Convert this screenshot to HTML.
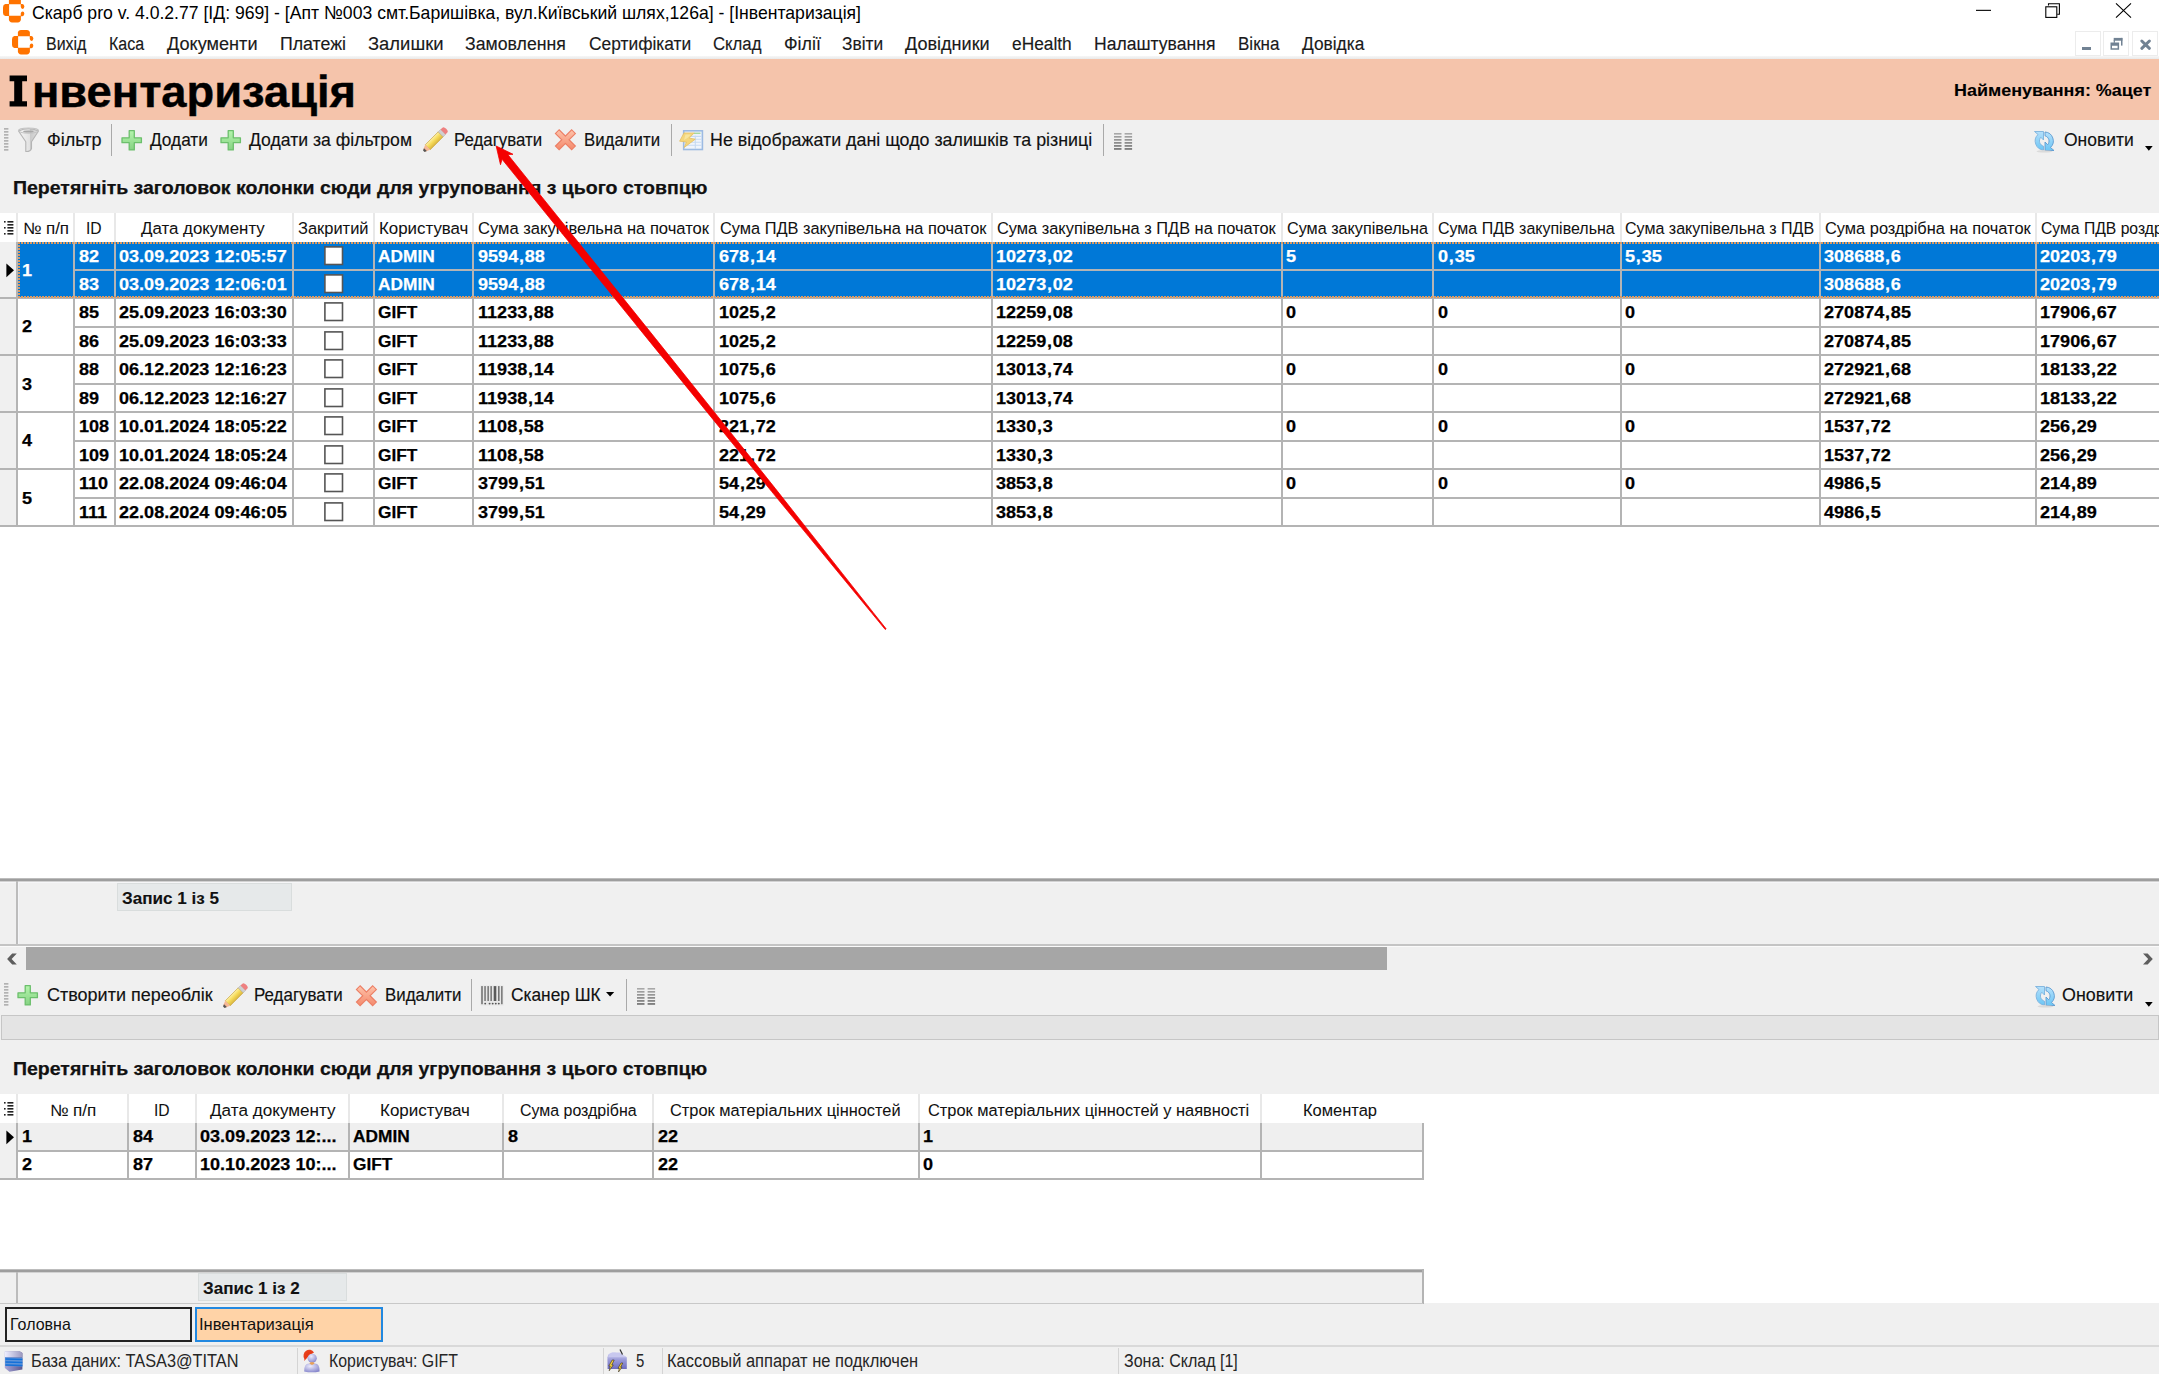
<!DOCTYPE html><html><head><meta charset="utf-8"><style>
html,body{margin:0;padding:0;}
body{width:2159px;height:1374px;position:relative;overflow:hidden;background:#fff;font-family:"Liberation Sans",sans-serif;}
.t{position:absolute;white-space:nowrap;transform-origin:0 0;}
.r{position:absolute;}
</style></head><body>
<div class="r" style="left:0px;top:0px;width:2159px;height:56px;background:#fff;"></div>
<div class="r" style="left:0px;top:56px;width:2159px;height:3px;background:linear-gradient(#f7f7f7,#e9e9e9);"></div>
<div class="r" style="left:0px;top:59px;width:2159px;height:61px;background:#f5c4ab;"></div>
<div class="r" style="left:0px;top:120px;width:2159px;height:93px;background:#f0f0f0;"></div>
<div class="r" style="left:0px;top:213px;width:2159px;height:665px;background:#fff;"></div>
<div class="r" style="left:0px;top:880px;width:2159px;height:64px;background:#f0f0f0;"></div>
<div class="r" style="left:0px;top:878px;width:2159px;height:1px;background:#bdbdbd;"></div>
<div class="r" style="left:0px;top:879px;width:2159px;height:2px;background:#9e9e9e;"></div>
<div class="r" style="left:0px;top:881px;width:2159px;height:1px;background:#d2d2d2;"></div>
<div class="r" style="left:0px;top:882px;width:2159px;height:1px;background:#f6f6f8;"></div>
<div class="r" style="left:0px;top:944px;width:2159px;height:2px;background:#c4c4c4;"></div>
<div class="r" style="left:0px;top:946px;width:2159px;height:1px;background:#fafafa;"></div>
<div class="r" style="left:0px;top:947px;width:2159px;height:147px;background:#f0f0f0;"></div>
<div class="r" style="left:0px;top:1094px;width:2159px;height:209px;background:#fff;"></div>
<div class="r" style="left:0px;top:1303px;width:2159px;height:42px;background:#f0f0f0;"></div>
<div class="r" style="left:0px;top:1345px;width:2159px;height:2px;background:#d9d9d9;"></div>
<div class="r" style="left:0px;top:1347px;width:2159px;height:27px;background:#f0f0f0;"></div>
<svg class="r" style="left:3.3px;top:-1.7px;" width="22" height="25" viewBox="0 0 22 25"><g fill="#ff7300"><path d="M5.9 6.3 L5.9 2.6 Q6.2 0 9 0 H14.8 Q17.6 0 17.9 2.6 L17.9 6.3 Z"/><path d="M6.1 6.1 H2.4 Q0 6.4 0 9.2 V15 Q0 17.6 2.4 17.9 H6.1 Z"/><path d="M5.9 17.7 V21.6 Q6.2 24.4 9 24.4 H14.8 Q17.6 24.4 17.9 21.6 V17.7 Z"/><path d="M17.7 6.1 H19.4 Q21.3 6.3 21.3 8.6 Q21.3 10.9 19.6 10.9 Q17.9 10.9 17.8 8.8 Z"/><path d="M17.7 18.3 H19.4 Q21.3 18.1 21.3 15.8 Q21.3 13.5 19.6 13.5 Q17.9 13.5 17.8 15.6 Z"/></g></svg>
<svg class="r" style="left:11.9px;top:30.2px;" width="22" height="25" viewBox="0 0 22 25"><g fill="#ff7300"><path d="M5.9 6.3 L5.9 2.6 Q6.2 0 9 0 H14.8 Q17.6 0 17.9 2.6 L17.9 6.3 Z"/><path d="M6.1 6.1 H2.4 Q0 6.4 0 9.2 V15 Q0 17.6 2.4 17.9 H6.1 Z"/><path d="M5.9 17.7 V21.6 Q6.2 24.4 9 24.4 H14.8 Q17.6 24.4 17.9 21.6 V17.7 Z"/><path d="M17.7 6.1 H19.4 Q21.3 6.3 21.3 8.6 Q21.3 10.9 19.6 10.9 Q17.9 10.9 17.8 8.8 Z"/><path d="M17.7 18.3 H19.4 Q21.3 18.1 21.3 15.8 Q21.3 13.5 19.6 13.5 Q17.9 13.5 17.8 15.6 Z"/></g></svg>
<div class="t" style="left:31.60px;top:3.00px;font-size:19px;line-height:19px;font-weight:400;color:#000;transform:scaleX(0.9265);">Скарб pro v. 4.0.2.77 [ІД: 969] - [Апт №003 смт.Баришівка, вул.Київський шлях,126а] - [Інвентаризація]</div>
<svg class="r" style="left:1975px;top:0px;" width="180" height="24" viewBox="0 0 180 24"><rect x="1" y="9.8" width="15" height="1.1" fill="#000"/><path d="M73.5 5.5 V3.7 H84.4 V14.3 H82.2" fill="none" stroke="#000" stroke-width="1.1"/><rect x="70.8" y="6.8" width="11" height="10.6" fill="none" stroke="#000" stroke-width="1.1"/><path d="M141 3.3 L156 17.7 M156 3.3 L141 17.7" stroke="#000" stroke-width="1.1"/></svg>
<div class="t" style="left:46.30px;top:35.00px;font-size:18px;line-height:18px;font-weight:400;color:#1a1a1a;transform:scaleX(0.8868);-webkit-text-stroke:0.15px currentColor;">Вихід</div>
<div class="t" style="left:109.30px;top:35.00px;font-size:18px;line-height:18px;font-weight:400;color:#1a1a1a;transform:scaleX(0.8905);-webkit-text-stroke:0.15px currentColor;">Каса</div>
<div class="t" style="left:166.50px;top:35.00px;font-size:18px;line-height:18px;font-weight:400;color:#1a1a1a;transform:scaleX(1.0066);-webkit-text-stroke:0.15px currentColor;">Документи</div>
<div class="t" style="left:280.00px;top:35.00px;font-size:18px;line-height:18px;font-weight:400;color:#1a1a1a;transform:scaleX(0.9859);-webkit-text-stroke:0.15px currentColor;">Платежі</div>
<div class="t" style="left:367.50px;top:35.00px;font-size:18px;line-height:18px;font-weight:400;color:#1a1a1a;transform:scaleX(1.0228);-webkit-text-stroke:0.15px currentColor;">Залишки</div>
<div class="t" style="left:465.10px;top:35.00px;font-size:18px;line-height:18px;font-weight:400;color:#1a1a1a;transform:scaleX(0.9838);-webkit-text-stroke:0.15px currentColor;">Замовлення</div>
<div class="t" style="left:589.20px;top:35.00px;font-size:18px;line-height:18px;font-weight:400;color:#1a1a1a;transform:scaleX(0.9650);-webkit-text-stroke:0.15px currentColor;">Сертифікати</div>
<div class="t" style="left:713.40px;top:35.00px;font-size:18px;line-height:18px;font-weight:400;color:#1a1a1a;transform:scaleX(0.9291);-webkit-text-stroke:0.15px currentColor;">Склад</div>
<div class="t" style="left:783.50px;top:35.00px;font-size:18px;line-height:18px;font-weight:400;color:#1a1a1a;transform:scaleX(0.9923);-webkit-text-stroke:0.15px currentColor;">Філії</div>
<div class="t" style="left:841.70px;top:35.00px;font-size:18px;line-height:18px;font-weight:400;color:#1a1a1a;transform:scaleX(0.9618);-webkit-text-stroke:0.15px currentColor;">Звіти</div>
<div class="t" style="left:904.75px;top:35.00px;font-size:18px;line-height:18px;font-weight:400;color:#1a1a1a;transform:scaleX(1.0029);-webkit-text-stroke:0.15px currentColor;">Довідники</div>
<div class="t" style="left:1011.90px;top:35.00px;font-size:18px;line-height:18px;font-weight:400;color:#1a1a1a;transform:scaleX(0.9622);-webkit-text-stroke:0.15px currentColor;">eHealth</div>
<div class="t" style="left:1094.30px;top:35.00px;font-size:18px;line-height:18px;font-weight:400;color:#1a1a1a;transform:scaleX(0.9758);-webkit-text-stroke:0.15px currentColor;">Налаштування</div>
<div class="t" style="left:1238.40px;top:35.00px;font-size:18px;line-height:18px;font-weight:400;color:#1a1a1a;transform:scaleX(0.9465);-webkit-text-stroke:0.15px currentColor;">Вікна</div>
<div class="t" style="left:1302.00px;top:35.00px;font-size:18px;line-height:18px;font-weight:400;color:#1a1a1a;transform:scaleX(0.9620);-webkit-text-stroke:0.15px currentColor;">Довідка</div>
<div class="r" style="left:2074.7px;top:30.9px;width:25.90000000000009px;height:25.300000000000004px;background:#fff;box-sizing:border-box;border:1px solid #ececec;"></div>
<div class="r" style="left:2103.3px;top:30.9px;width:25.90000000000009px;height:25.300000000000004px;background:#fff;box-sizing:border-box;border:1px solid #ececec;"></div>
<div class="r" style="left:2131.9px;top:30.9px;width:25.90000000000009px;height:25.300000000000004px;background:#fff;box-sizing:border-box;border:1px solid #ececec;"></div>
<svg class="r" style="left:2074px;top:30px;" width="84" height="27" viewBox="0 0 84 27"><g fill="#718293"><rect x="8" y="17" width="9" height="3" /><rect x="39.7" y="7.9" width="8.7" height="2.8"/><rect x="47" y="7.9" width="1.5" height="7.7"/><rect x="39.7" y="10" width="1.2" height="2.8"/><path fill-rule="evenodd" d="M36.5 12.6 H45.1 V19.8 H36.5 Z M38 15.7 H43.6 V18.3 H38 Z"/></g><path d="M67.8 11 L75.4 18.3 M75.4 11 L67.8 18.3" stroke="#718293" stroke-width="3" stroke-linecap="round"/></svg>
<svg class="r" style="left:0px;top:60px;" width="40" height="60" viewBox="0 0 40 60"><path d="M9.6 15.6 H27 V21.2 H22.2 V41.2 H27 V46.6 H9.6 V41.2 H14.2 V21.2 H9.6 Z" fill="#000"/></svg>
<div class="t" style="left:32.00px;top:69.00px;font-size:45px;line-height:45px;font-weight:700;color:#000;transform:scaleX(1.0066);-webkit-text-stroke:0.4px currentColor;">нвентаризація</div>
<div class="t" style="left:1953.70px;top:82.00px;font-size:16.5px;line-height:16.5px;font-weight:700;color:#000;transform:scaleX(1.0869);-webkit-text-stroke:0.1px currentColor;">Найменування: %ацет</div>
<svg class="r" style="left:4.3px;top:128.2px;" width="6" height="26" viewBox="0 0 6 26"><rect x="0" y="0.00" width="4.4" height="1.7" fill="#b2b2b2"/><rect x="0" y="3.00" width="4.4" height="1.7" fill="#b2b2b2"/><rect x="0" y="6.00" width="4.4" height="1.7" fill="#b2b2b2"/><rect x="0" y="9.00" width="4.4" height="1.7" fill="#b2b2b2"/><rect x="0" y="12.00" width="4.4" height="1.7" fill="#b2b2b2"/><rect x="0" y="15.00" width="4.4" height="1.7" fill="#b2b2b2"/><rect x="0" y="18.00" width="4.4" height="1.7" fill="#b2b2b2"/><rect x="0" y="21.00" width="4.4" height="1.7" fill="#b2b2b2"/></svg>
<svg class="r" style="left:14px;top:125px;" width="30" height="30" viewBox="0 0 30 30"><defs><linearGradient id="fg" x1="0" y1="0" x2="1" y2="0"><stop offset="0" stop-color="#f6f6f6"/><stop offset="0.55" stop-color="#e2e2e2"/><stop offset="0.56" stop-color="#c8c8c8"/><stop offset="1" stop-color="#dedede"/></linearGradient></defs><path d="M4.5 6 Q14.5 1.5 24.5 6 L17.5 16.8 V23.5 Q16.5 26.5 12.5 26.5 H11.8 V16.8 Z" fill="url(#fg)" stroke="#b4b4b4" stroke-width="1.1" stroke-linejoin="round"/><ellipse cx="14.5" cy="5.6" rx="10" ry="2.6" fill="none" stroke="#c4c4c4" stroke-width="1.1"/><ellipse cx="14.4" cy="6.6" rx="5.2" ry="1.0" fill="#a8a8a8"/></svg>
<div class="t" style="left:46.90px;top:132.00px;font-size:17.5px;line-height:17.5px;font-weight:400;color:#111;transform:scaleX(1.0302);-webkit-text-stroke:0.15px currentColor;">Фільтр</div>
<div class="r" style="left:111.3px;top:123.5px;width:1.2000000000000028px;height:32.5px;background:#a9a9a9;"></div>
<svg class="r" style="left:121px;top:129.5px;" width="22" height="21" viewBox="0 0 22 21"><defs><linearGradient id="pg" x1="0" y1="0" x2="0" y2="1"><stop offset="0" stop-color="#b4f5ac"/><stop offset="1" stop-color="#86d283"/></linearGradient></defs><path d="M8.2 0.7 H13.3 V7.8 H20.4 V12.7 H13.3 V19.9 H8.2 V12.7 H1 V7.8 H8.2 Z" fill="url(#pg)" stroke="#6cbf6c" stroke-width="1.3" stroke-linejoin="round"/></svg>
<div class="t" style="left:150.00px;top:132.00px;font-size:17.5px;line-height:17.5px;font-weight:400;color:#111;transform:scaleX(0.9856);-webkit-text-stroke:0.15px currentColor;">Додати</div>
<svg class="r" style="left:220.2px;top:129.5px;" width="22" height="21" viewBox="0 0 22 21"><defs><linearGradient id="pg" x1="0" y1="0" x2="0" y2="1"><stop offset="0" stop-color="#b4f5ac"/><stop offset="1" stop-color="#86d283"/></linearGradient></defs><path d="M8.2 0.7 H13.3 V7.8 H20.4 V12.7 H13.3 V19.9 H8.2 V12.7 H1 V7.8 H8.2 Z" fill="url(#pg)" stroke="#6cbf6c" stroke-width="1.3" stroke-linejoin="round"/></svg>
<div class="t" style="left:248.80px;top:132.00px;font-size:17.5px;line-height:17.5px;font-weight:400;color:#111;transform:scaleX(1.0063);-webkit-text-stroke:0.15px currentColor;">Додати за фільтром</div>
<svg class="r" style="left:418px;top:124px;" width="34" height="32" viewBox="0 0 34 32"><defs><linearGradient id="pcg" x1="0" y1="0" x2="0" y2="1"><stop offset="0" stop-color="#fbf0a8"/><stop offset="0.45" stop-color="#f7dc5a"/><stop offset="1" stop-color="#d9b640"/></linearGradient></defs><g transform="translate(17,16) rotate(-45) scale(0.9)"><path d="M-11.5 -3.9 H9 V3.9 H-11.5 Z" fill="url(#pcg)" stroke="#c9a440" stroke-width="0.7"/><path d="M9 -3.9 H12.6 V3.9 H9 Z" fill="#cfcfcf" stroke="#a8a8a8" stroke-width="0.5"/><path d="M12.6 -3.9 H15.5 Q17.6 -3.9 17.6 0 Q17.6 3.9 15.5 3.9 H12.6 Z" fill="#ee8080"/><path d="M-11.5 -3.9 L-17 -1.6 V1.6 L-11.5 3.9 Z" fill="#f6b896"/><path d="M-15 -2.2 L-17.6 -1.2 V1.2 L-15 2.2 Z" fill="#555"/></g></svg>
<div class="t" style="left:453.80px;top:132.00px;font-size:17.5px;line-height:17.5px;font-weight:400;color:#111;transform:scaleX(0.9633);-webkit-text-stroke:0.15px currentColor;">Редагувати</div>
<svg class="r" style="left:550px;top:125px;" width="32" height="30" viewBox="0 0 32 30"><defs><linearGradient id="xg" x1="0" y1="0" x2="0" y2="1"><stop offset="0" stop-color="#fdbda4"/><stop offset="1" stop-color="#f58f72"/></linearGradient></defs><path d="M6.9 6.3 L23.9 23.3 M23.9 6.3 L6.9 23.3" stroke="#ec7e64" stroke-width="6.4"/><path d="M7.6 7.0 L23.2 22.6 M23.2 7.0 L7.6 22.6" stroke="url(#xg)" stroke-width="4.0"/></svg>
<div class="t" style="left:584.40px;top:132.00px;font-size:17.5px;line-height:17.5px;font-weight:400;color:#111;transform:scaleX(0.9612);-webkit-text-stroke:0.15px currentColor;">Видалити</div>
<div class="r" style="left:670.8px;top:123.7px;width:1.2000000000000455px;height:32.3px;background:#a9a9a9;"></div>
<svg class="r" style="left:675px;top:125px;" width="32" height="30" viewBox="0 0 32 30"><rect x="8.7" y="5.8" width="18.7" height="18.7" fill="#f0f5fc" stroke="#9cbae2" stroke-width="1.6"/><g stroke="#c6daf2" stroke-width="1.1"><path d="M10 11.4 H26.5 M10 14.2 H26.5 M10 17.2 H26.5 M10 20.3 H26.5 M20.3 10.5 V24"/></g><path d="M19 8.3 H25.5" stroke="#a6d89e" stroke-width="1.5"/><path d="M9 7.9 L19.2 7.9 L14.2 13.1 L20.3 14.2 L9.2 22.5 L11.4 17 L4.6 16.2 Z" fill="#f4d67c" stroke="#e4bb5a" stroke-width="0.7" stroke-linejoin="round"/><path d="M10.5 9.5 L16 9.5 L12.5 13 L9 15 Z" fill="#f9e8a6" opacity="0.8"/></svg>
<div class="t" style="left:710.00px;top:132.00px;font-size:17.5px;line-height:17.5px;font-weight:400;color:#111;transform:scaleX(1.0188);-webkit-text-stroke:0.15px currentColor;">Не відображати дані щодо залишків та різниці</div>
<div class="r" style="left:1102.6px;top:123.6px;width:1.2000000000000455px;height:32.5px;background:#a9a9a9;"></div>
<svg class="r" style="left:1114.4px;top:132.6px;" width="19" height="18" viewBox="0 0 19 18"><rect x="0" y="0.00" width="7.5" height="1.6" fill="#a8a8a8"/><rect x="10.6" y="0.00" width="7.5" height="1.6" fill="#a8a8a8"/><rect x="0" y="3.03" width="7.5" height="1.6" fill="#9c9c9c"/><rect x="10.6" y="3.03" width="7.5" height="1.6" fill="#9c9c9c"/><rect x="0" y="6.06" width="7.5" height="1.6" fill="#909090"/><rect x="10.6" y="6.06" width="7.5" height="1.6" fill="#909090"/><rect x="0" y="9.09" width="7.5" height="1.6" fill="#848484"/><rect x="10.6" y="9.09" width="7.5" height="1.6" fill="#848484"/><rect x="0" y="12.12" width="7.5" height="1.6" fill="#787878"/><rect x="10.6" y="12.12" width="7.5" height="1.6" fill="#787878"/><rect x="0" y="15.15" width="7.5" height="1.6" fill="#6c6c6c"/><rect x="10.6" y="15.15" width="7.5" height="1.6" fill="#6c6c6c"/></svg>
<svg class="r" style="left:2033px;top:128.5px;" width="23" height="24" viewBox="0 0 23 24"><defs><linearGradient id="rg" x1="0" y1="0" x2="0" y2="1"><stop offset="0" stop-color="#b5e0fb"/><stop offset="1" stop-color="#6cc6f5"/></linearGradient></defs><path d="M10.5 21 A9 9 0 0 1 5 5.5 L1.5 2.5 H10.5 V11 L7.8 8.3 A5.5 5.5 0 0 0 10.5 17.2 Z" fill="url(#rg)" stroke="#7cb2de" stroke-width="0.9"/><path d="M12 3 A9 9 0 0 1 17.5 18.5 L21 21.5 H12 V13 L14.7 15.7 A5.5 5.5 0 0 0 12 6.8 Z" fill="url(#rg)" stroke="#5c9ad0" stroke-width="0.9"/><ellipse cx="11.5" cy="22.3" rx="8" ry="1.2" fill="#d0d0d0" opacity="0.7"/></svg>
<div class="t" style="left:2063.50px;top:132.00px;font-size:17.5px;line-height:17.5px;font-weight:400;color:#111;transform:scaleX(0.9989);-webkit-text-stroke:0.15px currentColor;">Оновити</div>
<svg class="r" style="left:2144.9px;top:146px;" width="10" height="6" viewBox="0 0 10 6"><path d="M0 0 H7.7 L3.85 4.8 Z" fill="#000"/></svg>
<div class="t" style="left:12.80px;top:179.00px;font-size:18.5px;line-height:18.5px;font-weight:700;color:#111;transform:scaleX(1.0543);-webkit-text-stroke:0.25px currentColor;">Перетягніть заголовок колонки сюди для угруповання з цього стовпцю</div>
<div class="r" style="left:16px;top:213px;width:2px;height:29px;background:#e8e8e8;"></div>
<div class="r" style="left:73px;top:213px;width:2px;height:29px;background:#e8e8e8;"></div>
<div class="r" style="left:114px;top:213px;width:2px;height:29px;background:#e8e8e8;"></div>
<div class="r" style="left:292px;top:213px;width:2px;height:29px;background:#e8e8e8;"></div>
<div class="r" style="left:373px;top:213px;width:2px;height:29px;background:#e8e8e8;"></div>
<div class="r" style="left:472px;top:213px;width:2px;height:29px;background:#e8e8e8;"></div>
<div class="r" style="left:713px;top:213px;width:2px;height:29px;background:#e8e8e8;"></div>
<div class="r" style="left:991px;top:213px;width:2px;height:29px;background:#e8e8e8;"></div>
<div class="r" style="left:1281px;top:213px;width:2px;height:29px;background:#e8e8e8;"></div>
<div class="r" style="left:1432px;top:213px;width:2px;height:29px;background:#e8e8e8;"></div>
<div class="r" style="left:1620px;top:213px;width:2px;height:29px;background:#e8e8e8;"></div>
<div class="r" style="left:1819px;top:213px;width:2px;height:29px;background:#e8e8e8;"></div>
<div class="r" style="left:2035px;top:213px;width:2px;height:29px;background:#e8e8e8;"></div>
<svg class="r" style="left:4.2px;top:221.2px;" width="10" height="14" viewBox="0 0 10 14"><rect x="0" y="0" width="1.6" height="1.6" fill="#222"/><rect x="3.4" y="0" width="6" height="1.6" fill="#222"/><rect x="3.4" y="3" width="6" height="1.6" fill="#222"/><rect x="0" y="6" width="1.6" height="1.6" fill="#222"/><rect x="3.4" y="6" width="6" height="1.6" fill="#222"/><rect x="3.4" y="9" width="6" height="1.6" fill="#222"/><rect x="0" y="12" width="1.6" height="1.6" fill="#222"/><rect x="3.4" y="12" width="6" height="1.6" fill="#222"/></svg>
<div class="t" style="left:22.80px;top:220.00px;font-size:16.3px;line-height:16.3px;font-weight:400;color:#111;transform:scaleX(1.0432);-webkit-text-stroke:0.05px currentColor;">№ п/п</div>
<div class="t" style="left:86.00px;top:220.00px;font-size:16.3px;line-height:16.3px;font-weight:400;color:#111;transform:scaleX(0.9632);-webkit-text-stroke:0.05px currentColor;">ID</div>
<div class="t" style="left:141.20px;top:220.00px;font-size:16.3px;line-height:16.3px;font-weight:400;color:#111;transform:scaleX(1.0363);-webkit-text-stroke:0.05px currentColor;">Дата документу</div>
<div class="t" style="left:298.20px;top:220.00px;font-size:16.3px;line-height:16.3px;font-weight:400;color:#111;transform:scaleX(1.0101);-webkit-text-stroke:0.05px currentColor;">Закритий</div>
<div class="t" style="left:378.70px;top:220.00px;font-size:16.3px;line-height:16.3px;font-weight:400;color:#111;transform:scaleX(1.0364);-webkit-text-stroke:0.05px currentColor;">Користувач</div>
<div class="t" style="left:477.90px;top:220.00px;font-size:16.3px;line-height:16.3px;font-weight:400;color:#111;transform:scaleX(1.0172);-webkit-text-stroke:0.05px currentColor;">Сума закупівельна на початок</div>
<div class="t" style="left:719.90px;top:220.00px;font-size:16.3px;line-height:16.3px;font-weight:400;color:#111;transform:scaleX(1.0044);-webkit-text-stroke:0.05px currentColor;">Сума ПДВ закупівельна на початок</div>
<div class="t" style="left:997.10px;top:220.00px;font-size:16.3px;line-height:16.3px;font-weight:400;color:#111;transform:scaleX(1.0056);-webkit-text-stroke:0.05px currentColor;">Сума закупівельна з ПДВ на початок</div>
<div class="t" style="left:1286.90px;top:220.00px;font-size:16.3px;line-height:16.3px;font-weight:400;color:#111;transform:scaleX(0.9932);-webkit-text-stroke:0.05px currentColor;">Сума закупівельна</div>
<div class="t" style="left:1437.70px;top:220.00px;font-size:16.3px;line-height:16.3px;font-weight:400;color:#111;transform:scaleX(0.9815);-webkit-text-stroke:0.05px currentColor;">Сума ПДВ закупівельна</div>
<div class="t" style="left:1625.30px;top:220.00px;font-size:16.3px;line-height:16.3px;font-weight:400;color:#111;transform:scaleX(0.9853);-webkit-text-stroke:0.05px currentColor;">Сума закупівельна з ПДВ</div>
<div class="t" style="left:1824.80px;top:220.00px;font-size:16.3px;line-height:16.3px;font-weight:400;color:#111;transform:scaleX(1.0067);-webkit-text-stroke:0.05px currentColor;">Сума роздрібна на початок</div>
<div class="t" style="left:2041.00px;top:220.00px;font-size:16.3px;line-height:16.3px;font-weight:400;color:#111;transform:scaleX(0.9642);-webkit-text-stroke:0.05px currentColor;">Сума ПДВ роздрібна на початок</div>
<div class="r" style="left:0px;top:242px;width:17px;height:284px;background:#f0f0f0;"></div>
<div class="r" style="left:17px;top:242px;width:2142px;height:56px;background:#0078d7;"></div>
<div class="r" style="left:16px;top:242px;width:2px;height:285px;background:#b4b4b4;"></div>
<div class="r" style="left:73px;top:242px;width:2px;height:285px;background:#b4b4b4;"></div>
<div class="r" style="left:114px;top:242px;width:2px;height:285px;background:#b4b4b4;"></div>
<div class="r" style="left:292px;top:242px;width:2px;height:285px;background:#b4b4b4;"></div>
<div class="r" style="left:373px;top:242px;width:2px;height:285px;background:#b4b4b4;"></div>
<div class="r" style="left:472px;top:242px;width:2px;height:285px;background:#b4b4b4;"></div>
<div class="r" style="left:713px;top:242px;width:2px;height:285px;background:#b4b4b4;"></div>
<div class="r" style="left:991px;top:242px;width:2px;height:285px;background:#b4b4b4;"></div>
<div class="r" style="left:1281px;top:242px;width:2px;height:285px;background:#b4b4b4;"></div>
<div class="r" style="left:1432px;top:242px;width:2px;height:285px;background:#b4b4b4;"></div>
<div class="r" style="left:1620px;top:242px;width:2px;height:285px;background:#b4b4b4;"></div>
<div class="r" style="left:1819px;top:242px;width:2px;height:285px;background:#b4b4b4;"></div>
<div class="r" style="left:2035px;top:242px;width:2px;height:285px;background:#b4b4b4;"></div>
<div class="r" style="left:73px;top:269px;width:2086px;height:2px;background:#b4b4b4;"></div>
<div class="r" style="left:0px;top:297px;width:2159px;height:2px;background:#b4b4b4;"></div>
<div class="r" style="left:73px;top:326px;width:2086px;height:2px;background:#b4b4b4;"></div>
<div class="r" style="left:0px;top:354px;width:2159px;height:2px;background:#b4b4b4;"></div>
<div class="r" style="left:73px;top:383px;width:2086px;height:2px;background:#b4b4b4;"></div>
<div class="r" style="left:0px;top:411px;width:2159px;height:2px;background:#b4b4b4;"></div>
<div class="r" style="left:73px;top:440px;width:2086px;height:2px;background:#b4b4b4;"></div>
<div class="r" style="left:0px;top:468px;width:2159px;height:2px;background:#b4b4b4;"></div>
<div class="r" style="left:73px;top:497px;width:2086px;height:2px;background:#b4b4b4;"></div>
<div class="r" style="left:0px;top:525px;width:2159px;height:2px;background:#b4b4b4;"></div>
<div class="r" style="left:18px;top:242px;width:2141px;height:1.5px;background:repeating-linear-gradient(90deg,#dc9a62 0 1.6px,transparent 1.6px 3px);"></div>
<div class="r" style="left:18px;top:296px;width:2141px;height:1.5px;background:repeating-linear-gradient(90deg,#dc9a62 0 1.6px,transparent 1.6px 3px);"></div>
<div class="r" style="left:18px;top:242px;width:1.5px;height:55px;background:repeating-linear-gradient(180deg,#dc9a62 0 1.6px,transparent 1.6px 3px);"></div>
<svg class="r" style="left:5.5px;top:262.5px;" width="9" height="15" viewBox="0 0 9 15"><path d="M0.4 0.4 L8 7.2 L0.4 14.2 Z" fill="#000"/></svg>
<div class="t" style="left:78.60px;top:248.00px;font-size:17.2px;line-height:17.2px;font-weight:700;color:#fff;transform:scaleX(1.0506);-webkit-text-stroke:0.25px currentColor;">82</div>
<div class="t" style="left:119.00px;top:248.00px;font-size:17.2px;line-height:17.2px;font-weight:700;color:#fff;transform:scaleX(1.0506);-webkit-text-stroke:0.25px currentColor;">03.09.2023 12:05:57</div>
<svg class="r" style="left:324px;top:245.8px;" width="20" height="20" viewBox="0 0 20 20"><rect x="0.9" y="0.9" width="17.6" height="17.6" fill="#fff" stroke="#555" stroke-width="1.6"/></svg>
<div class="t" style="left:378.20px;top:248.00px;font-size:17.2px;line-height:17.2px;font-weight:700;color:#fff;transform:scaleX(1.0060);-webkit-text-stroke:0.25px currentColor;">ADMIN</div>
<div class="t" style="left:477.60px;top:248.00px;font-size:17.2px;line-height:17.2px;font-weight:700;color:#fff;transform:scaleX(1.0506);-webkit-text-stroke:0.25px currentColor;">9594<span style="padding:0 0.75px">,</span>88</div>
<div class="t" style="left:718.80px;top:248.00px;font-size:17.2px;line-height:17.2px;font-weight:700;color:#fff;transform:scaleX(1.0506);-webkit-text-stroke:0.25px currentColor;">678<span style="padding:0 0.75px">,</span>14</div>
<div class="t" style="left:996.10px;top:248.00px;font-size:17.2px;line-height:17.2px;font-weight:700;color:#fff;transform:scaleX(1.0506);-webkit-text-stroke:0.25px currentColor;">10273<span style="padding:0 0.75px">,</span>02</div>
<div class="t" style="left:1286.00px;top:248.00px;font-size:17.2px;line-height:17.2px;font-weight:700;color:#fff;transform:scaleX(1.0506);-webkit-text-stroke:0.25px currentColor;">5</div>
<div class="t" style="left:1437.70px;top:248.00px;font-size:17.2px;line-height:17.2px;font-weight:700;color:#fff;transform:scaleX(1.0506);-webkit-text-stroke:0.25px currentColor;">0<span style="padding:0 0.75px">,</span>35</div>
<div class="t" style="left:1624.90px;top:248.00px;font-size:17.2px;line-height:17.2px;font-weight:700;color:#fff;transform:scaleX(1.0506);-webkit-text-stroke:0.25px currentColor;">5<span style="padding:0 0.75px">,</span>35</div>
<div class="t" style="left:1824.10px;top:248.00px;font-size:17.2px;line-height:17.2px;font-weight:700;color:#fff;transform:scaleX(1.0506);-webkit-text-stroke:0.25px currentColor;">308688<span style="padding:0 0.75px">,</span>6</div>
<div class="t" style="left:2040.20px;top:248.00px;font-size:17.2px;line-height:17.2px;font-weight:700;color:#fff;transform:scaleX(1.0506);-webkit-text-stroke:0.25px currentColor;">20203<span style="padding:0 0.75px">,</span>79</div>
<div class="t" style="left:78.60px;top:276.00px;font-size:17.2px;line-height:17.2px;font-weight:700;color:#fff;transform:scaleX(1.0506);-webkit-text-stroke:0.25px currentColor;">83</div>
<div class="t" style="left:119.00px;top:276.00px;font-size:17.2px;line-height:17.2px;font-weight:700;color:#fff;transform:scaleX(1.0506);-webkit-text-stroke:0.25px currentColor;">03.09.2023 12:06:01</div>
<svg class="r" style="left:324px;top:274.2px;" width="20" height="20" viewBox="0 0 20 20"><rect x="0.9" y="0.9" width="17.6" height="17.6" fill="#fff" stroke="#555" stroke-width="1.6"/></svg>
<div class="t" style="left:378.20px;top:276.00px;font-size:17.2px;line-height:17.2px;font-weight:700;color:#fff;transform:scaleX(1.0060);-webkit-text-stroke:0.25px currentColor;">ADMIN</div>
<div class="t" style="left:477.60px;top:276.00px;font-size:17.2px;line-height:17.2px;font-weight:700;color:#fff;transform:scaleX(1.0506);-webkit-text-stroke:0.25px currentColor;">9594<span style="padding:0 0.75px">,</span>88</div>
<div class="t" style="left:718.80px;top:276.00px;font-size:17.2px;line-height:17.2px;font-weight:700;color:#fff;transform:scaleX(1.0506);-webkit-text-stroke:0.25px currentColor;">678<span style="padding:0 0.75px">,</span>14</div>
<div class="t" style="left:996.10px;top:276.00px;font-size:17.2px;line-height:17.2px;font-weight:700;color:#fff;transform:scaleX(1.0506);-webkit-text-stroke:0.25px currentColor;">10273<span style="padding:0 0.75px">,</span>02</div>
<div class="t" style="left:1824.10px;top:276.00px;font-size:17.2px;line-height:17.2px;font-weight:700;color:#fff;transform:scaleX(1.0506);-webkit-text-stroke:0.25px currentColor;">308688<span style="padding:0 0.75px">,</span>6</div>
<div class="t" style="left:2040.20px;top:276.00px;font-size:17.2px;line-height:17.2px;font-weight:700;color:#fff;transform:scaleX(1.0506);-webkit-text-stroke:0.25px currentColor;">20203<span style="padding:0 0.75px">,</span>79</div>
<div class="t" style="left:78.60px;top:304.00px;font-size:17.2px;line-height:17.2px;font-weight:700;color:#000;transform:scaleX(1.0506);-webkit-text-stroke:0.25px currentColor;">85</div>
<div class="t" style="left:119.00px;top:304.00px;font-size:17.2px;line-height:17.2px;font-weight:700;color:#000;transform:scaleX(1.0506);-webkit-text-stroke:0.25px currentColor;">25.09.2023 16:03:30</div>
<svg class="r" style="left:324px;top:301.8px;" width="20" height="20" viewBox="0 0 20 20"><rect x="0.9" y="0.9" width="17.6" height="17.6" fill="#fff" stroke="#555" stroke-width="1.6"/></svg>
<div class="t" style="left:378.20px;top:304.00px;font-size:17.2px;line-height:17.2px;font-weight:700;color:#000;transform:scaleX(1.0060);-webkit-text-stroke:0.25px currentColor;">GIFT</div>
<div class="t" style="left:477.60px;top:304.00px;font-size:17.2px;line-height:17.2px;font-weight:700;color:#000;transform:scaleX(1.0506);-webkit-text-stroke:0.25px currentColor;">11233<span style="padding:0 0.75px">,</span>88</div>
<div class="t" style="left:718.80px;top:304.00px;font-size:17.2px;line-height:17.2px;font-weight:700;color:#000;transform:scaleX(1.0506);-webkit-text-stroke:0.25px currentColor;">1025<span style="padding:0 0.75px">,</span>2</div>
<div class="t" style="left:996.10px;top:304.00px;font-size:17.2px;line-height:17.2px;font-weight:700;color:#000;transform:scaleX(1.0506);-webkit-text-stroke:0.25px currentColor;">12259<span style="padding:0 0.75px">,</span>08</div>
<div class="t" style="left:1286.00px;top:304.00px;font-size:17.2px;line-height:17.2px;font-weight:700;color:#000;transform:scaleX(1.0506);-webkit-text-stroke:0.25px currentColor;">0</div>
<div class="t" style="left:1437.70px;top:304.00px;font-size:17.2px;line-height:17.2px;font-weight:700;color:#000;transform:scaleX(1.0506);-webkit-text-stroke:0.25px currentColor;">0</div>
<div class="t" style="left:1624.90px;top:304.00px;font-size:17.2px;line-height:17.2px;font-weight:700;color:#000;transform:scaleX(1.0506);-webkit-text-stroke:0.25px currentColor;">0</div>
<div class="t" style="left:1824.10px;top:304.00px;font-size:17.2px;line-height:17.2px;font-weight:700;color:#000;transform:scaleX(1.0506);-webkit-text-stroke:0.25px currentColor;">270874<span style="padding:0 0.75px">,</span>85</div>
<div class="t" style="left:2040.20px;top:304.00px;font-size:17.2px;line-height:17.2px;font-weight:700;color:#000;transform:scaleX(1.0506);-webkit-text-stroke:0.25px currentColor;">17906<span style="padding:0 0.75px">,</span>67</div>
<div class="t" style="left:78.60px;top:333.00px;font-size:17.2px;line-height:17.2px;font-weight:700;color:#000;transform:scaleX(1.0506);-webkit-text-stroke:0.25px currentColor;">86</div>
<div class="t" style="left:119.00px;top:333.00px;font-size:17.2px;line-height:17.2px;font-weight:700;color:#000;transform:scaleX(1.0506);-webkit-text-stroke:0.25px currentColor;">25.09.2023 16:03:33</div>
<svg class="r" style="left:324px;top:331.2px;" width="20" height="20" viewBox="0 0 20 20"><rect x="0.9" y="0.9" width="17.6" height="17.6" fill="#fff" stroke="#555" stroke-width="1.6"/></svg>
<div class="t" style="left:378.20px;top:333.00px;font-size:17.2px;line-height:17.2px;font-weight:700;color:#000;transform:scaleX(1.0060);-webkit-text-stroke:0.25px currentColor;">GIFT</div>
<div class="t" style="left:477.60px;top:333.00px;font-size:17.2px;line-height:17.2px;font-weight:700;color:#000;transform:scaleX(1.0506);-webkit-text-stroke:0.25px currentColor;">11233<span style="padding:0 0.75px">,</span>88</div>
<div class="t" style="left:718.80px;top:333.00px;font-size:17.2px;line-height:17.2px;font-weight:700;color:#000;transform:scaleX(1.0506);-webkit-text-stroke:0.25px currentColor;">1025<span style="padding:0 0.75px">,</span>2</div>
<div class="t" style="left:996.10px;top:333.00px;font-size:17.2px;line-height:17.2px;font-weight:700;color:#000;transform:scaleX(1.0506);-webkit-text-stroke:0.25px currentColor;">12259<span style="padding:0 0.75px">,</span>08</div>
<div class="t" style="left:1824.10px;top:333.00px;font-size:17.2px;line-height:17.2px;font-weight:700;color:#000;transform:scaleX(1.0506);-webkit-text-stroke:0.25px currentColor;">270874<span style="padding:0 0.75px">,</span>85</div>
<div class="t" style="left:2040.20px;top:333.00px;font-size:17.2px;line-height:17.2px;font-weight:700;color:#000;transform:scaleX(1.0506);-webkit-text-stroke:0.25px currentColor;">17906<span style="padding:0 0.75px">,</span>67</div>
<div class="t" style="left:78.60px;top:361.00px;font-size:17.2px;line-height:17.2px;font-weight:700;color:#000;transform:scaleX(1.0506);-webkit-text-stroke:0.25px currentColor;">88</div>
<div class="t" style="left:119.00px;top:361.00px;font-size:17.2px;line-height:17.2px;font-weight:700;color:#000;transform:scaleX(1.0506);-webkit-text-stroke:0.25px currentColor;">06.12.2023 12:16:23</div>
<svg class="r" style="left:324px;top:358.8px;" width="20" height="20" viewBox="0 0 20 20"><rect x="0.9" y="0.9" width="17.6" height="17.6" fill="#fff" stroke="#555" stroke-width="1.6"/></svg>
<div class="t" style="left:378.20px;top:361.00px;font-size:17.2px;line-height:17.2px;font-weight:700;color:#000;transform:scaleX(1.0060);-webkit-text-stroke:0.25px currentColor;">GIFT</div>
<div class="t" style="left:477.60px;top:361.00px;font-size:17.2px;line-height:17.2px;font-weight:700;color:#000;transform:scaleX(1.0506);-webkit-text-stroke:0.25px currentColor;">11938<span style="padding:0 0.75px">,</span>14</div>
<div class="t" style="left:718.80px;top:361.00px;font-size:17.2px;line-height:17.2px;font-weight:700;color:#000;transform:scaleX(1.0506);-webkit-text-stroke:0.25px currentColor;">1075<span style="padding:0 0.75px">,</span>6</div>
<div class="t" style="left:996.10px;top:361.00px;font-size:17.2px;line-height:17.2px;font-weight:700;color:#000;transform:scaleX(1.0506);-webkit-text-stroke:0.25px currentColor;">13013<span style="padding:0 0.75px">,</span>74</div>
<div class="t" style="left:1286.00px;top:361.00px;font-size:17.2px;line-height:17.2px;font-weight:700;color:#000;transform:scaleX(1.0506);-webkit-text-stroke:0.25px currentColor;">0</div>
<div class="t" style="left:1437.70px;top:361.00px;font-size:17.2px;line-height:17.2px;font-weight:700;color:#000;transform:scaleX(1.0506);-webkit-text-stroke:0.25px currentColor;">0</div>
<div class="t" style="left:1624.90px;top:361.00px;font-size:17.2px;line-height:17.2px;font-weight:700;color:#000;transform:scaleX(1.0506);-webkit-text-stroke:0.25px currentColor;">0</div>
<div class="t" style="left:1824.10px;top:361.00px;font-size:17.2px;line-height:17.2px;font-weight:700;color:#000;transform:scaleX(1.0506);-webkit-text-stroke:0.25px currentColor;">272921<span style="padding:0 0.75px">,</span>68</div>
<div class="t" style="left:2040.20px;top:361.00px;font-size:17.2px;line-height:17.2px;font-weight:700;color:#000;transform:scaleX(1.0506);-webkit-text-stroke:0.25px currentColor;">18133<span style="padding:0 0.75px">,</span>22</div>
<div class="t" style="left:78.60px;top:390.00px;font-size:17.2px;line-height:17.2px;font-weight:700;color:#000;transform:scaleX(1.0506);-webkit-text-stroke:0.25px currentColor;">89</div>
<div class="t" style="left:119.00px;top:390.00px;font-size:17.2px;line-height:17.2px;font-weight:700;color:#000;transform:scaleX(1.0506);-webkit-text-stroke:0.25px currentColor;">06.12.2023 12:16:27</div>
<svg class="r" style="left:324px;top:388.2px;" width="20" height="20" viewBox="0 0 20 20"><rect x="0.9" y="0.9" width="17.6" height="17.6" fill="#fff" stroke="#555" stroke-width="1.6"/></svg>
<div class="t" style="left:378.20px;top:390.00px;font-size:17.2px;line-height:17.2px;font-weight:700;color:#000;transform:scaleX(1.0060);-webkit-text-stroke:0.25px currentColor;">GIFT</div>
<div class="t" style="left:477.60px;top:390.00px;font-size:17.2px;line-height:17.2px;font-weight:700;color:#000;transform:scaleX(1.0506);-webkit-text-stroke:0.25px currentColor;">11938<span style="padding:0 0.75px">,</span>14</div>
<div class="t" style="left:718.80px;top:390.00px;font-size:17.2px;line-height:17.2px;font-weight:700;color:#000;transform:scaleX(1.0506);-webkit-text-stroke:0.25px currentColor;">1075<span style="padding:0 0.75px">,</span>6</div>
<div class="t" style="left:996.10px;top:390.00px;font-size:17.2px;line-height:17.2px;font-weight:700;color:#000;transform:scaleX(1.0506);-webkit-text-stroke:0.25px currentColor;">13013<span style="padding:0 0.75px">,</span>74</div>
<div class="t" style="left:1824.10px;top:390.00px;font-size:17.2px;line-height:17.2px;font-weight:700;color:#000;transform:scaleX(1.0506);-webkit-text-stroke:0.25px currentColor;">272921<span style="padding:0 0.75px">,</span>68</div>
<div class="t" style="left:2040.20px;top:390.00px;font-size:17.2px;line-height:17.2px;font-weight:700;color:#000;transform:scaleX(1.0506);-webkit-text-stroke:0.25px currentColor;">18133<span style="padding:0 0.75px">,</span>22</div>
<div class="t" style="left:78.60px;top:418.00px;font-size:17.2px;line-height:17.2px;font-weight:700;color:#000;transform:scaleX(1.0506);-webkit-text-stroke:0.25px currentColor;">108</div>
<div class="t" style="left:119.00px;top:418.00px;font-size:17.2px;line-height:17.2px;font-weight:700;color:#000;transform:scaleX(1.0506);-webkit-text-stroke:0.25px currentColor;">10.01.2024 18:05:22</div>
<svg class="r" style="left:324px;top:415.8px;" width="20" height="20" viewBox="0 0 20 20"><rect x="0.9" y="0.9" width="17.6" height="17.6" fill="#fff" stroke="#555" stroke-width="1.6"/></svg>
<div class="t" style="left:378.20px;top:418.00px;font-size:17.2px;line-height:17.2px;font-weight:700;color:#000;transform:scaleX(1.0060);-webkit-text-stroke:0.25px currentColor;">GIFT</div>
<div class="t" style="left:477.60px;top:418.00px;font-size:17.2px;line-height:17.2px;font-weight:700;color:#000;transform:scaleX(1.0506);-webkit-text-stroke:0.25px currentColor;">1108<span style="padding:0 0.75px">,</span>58</div>
<div class="t" style="left:718.80px;top:418.00px;font-size:17.2px;line-height:17.2px;font-weight:700;color:#000;transform:scaleX(1.0506);-webkit-text-stroke:0.25px currentColor;">221<span style="padding:0 0.75px">,</span>72</div>
<div class="t" style="left:996.10px;top:418.00px;font-size:17.2px;line-height:17.2px;font-weight:700;color:#000;transform:scaleX(1.0506);-webkit-text-stroke:0.25px currentColor;">1330<span style="padding:0 0.75px">,</span>3</div>
<div class="t" style="left:1286.00px;top:418.00px;font-size:17.2px;line-height:17.2px;font-weight:700;color:#000;transform:scaleX(1.0506);-webkit-text-stroke:0.25px currentColor;">0</div>
<div class="t" style="left:1437.70px;top:418.00px;font-size:17.2px;line-height:17.2px;font-weight:700;color:#000;transform:scaleX(1.0506);-webkit-text-stroke:0.25px currentColor;">0</div>
<div class="t" style="left:1624.90px;top:418.00px;font-size:17.2px;line-height:17.2px;font-weight:700;color:#000;transform:scaleX(1.0506);-webkit-text-stroke:0.25px currentColor;">0</div>
<div class="t" style="left:1824.10px;top:418.00px;font-size:17.2px;line-height:17.2px;font-weight:700;color:#000;transform:scaleX(1.0506);-webkit-text-stroke:0.25px currentColor;">1537<span style="padding:0 0.75px">,</span>72</div>
<div class="t" style="left:2040.20px;top:418.00px;font-size:17.2px;line-height:17.2px;font-weight:700;color:#000;transform:scaleX(1.0506);-webkit-text-stroke:0.25px currentColor;">256<span style="padding:0 0.75px">,</span>29</div>
<div class="t" style="left:78.60px;top:447.00px;font-size:17.2px;line-height:17.2px;font-weight:700;color:#000;transform:scaleX(1.0506);-webkit-text-stroke:0.25px currentColor;">109</div>
<div class="t" style="left:119.00px;top:447.00px;font-size:17.2px;line-height:17.2px;font-weight:700;color:#000;transform:scaleX(1.0506);-webkit-text-stroke:0.25px currentColor;">10.01.2024 18:05:24</div>
<svg class="r" style="left:324px;top:445.2px;" width="20" height="20" viewBox="0 0 20 20"><rect x="0.9" y="0.9" width="17.6" height="17.6" fill="#fff" stroke="#555" stroke-width="1.6"/></svg>
<div class="t" style="left:378.20px;top:447.00px;font-size:17.2px;line-height:17.2px;font-weight:700;color:#000;transform:scaleX(1.0060);-webkit-text-stroke:0.25px currentColor;">GIFT</div>
<div class="t" style="left:477.60px;top:447.00px;font-size:17.2px;line-height:17.2px;font-weight:700;color:#000;transform:scaleX(1.0506);-webkit-text-stroke:0.25px currentColor;">1108<span style="padding:0 0.75px">,</span>58</div>
<div class="t" style="left:718.80px;top:447.00px;font-size:17.2px;line-height:17.2px;font-weight:700;color:#000;transform:scaleX(1.0506);-webkit-text-stroke:0.25px currentColor;">221<span style="padding:0 0.75px">,</span>72</div>
<div class="t" style="left:996.10px;top:447.00px;font-size:17.2px;line-height:17.2px;font-weight:700;color:#000;transform:scaleX(1.0506);-webkit-text-stroke:0.25px currentColor;">1330<span style="padding:0 0.75px">,</span>3</div>
<div class="t" style="left:1824.10px;top:447.00px;font-size:17.2px;line-height:17.2px;font-weight:700;color:#000;transform:scaleX(1.0506);-webkit-text-stroke:0.25px currentColor;">1537<span style="padding:0 0.75px">,</span>72</div>
<div class="t" style="left:2040.20px;top:447.00px;font-size:17.2px;line-height:17.2px;font-weight:700;color:#000;transform:scaleX(1.0506);-webkit-text-stroke:0.25px currentColor;">256<span style="padding:0 0.75px">,</span>29</div>
<div class="t" style="left:78.60px;top:475.00px;font-size:17.2px;line-height:17.2px;font-weight:700;color:#000;transform:scaleX(1.0506);-webkit-text-stroke:0.25px currentColor;">110</div>
<div class="t" style="left:119.00px;top:475.00px;font-size:17.2px;line-height:17.2px;font-weight:700;color:#000;transform:scaleX(1.0506);-webkit-text-stroke:0.25px currentColor;">22.08.2024 09:46:04</div>
<svg class="r" style="left:324px;top:472.8px;" width="20" height="20" viewBox="0 0 20 20"><rect x="0.9" y="0.9" width="17.6" height="17.6" fill="#fff" stroke="#555" stroke-width="1.6"/></svg>
<div class="t" style="left:378.20px;top:475.00px;font-size:17.2px;line-height:17.2px;font-weight:700;color:#000;transform:scaleX(1.0060);-webkit-text-stroke:0.25px currentColor;">GIFT</div>
<div class="t" style="left:477.60px;top:475.00px;font-size:17.2px;line-height:17.2px;font-weight:700;color:#000;transform:scaleX(1.0506);-webkit-text-stroke:0.25px currentColor;">3799<span style="padding:0 0.75px">,</span>51</div>
<div class="t" style="left:718.80px;top:475.00px;font-size:17.2px;line-height:17.2px;font-weight:700;color:#000;transform:scaleX(1.0506);-webkit-text-stroke:0.25px currentColor;">54<span style="padding:0 0.75px">,</span>29</div>
<div class="t" style="left:996.10px;top:475.00px;font-size:17.2px;line-height:17.2px;font-weight:700;color:#000;transform:scaleX(1.0506);-webkit-text-stroke:0.25px currentColor;">3853<span style="padding:0 0.75px">,</span>8</div>
<div class="t" style="left:1286.00px;top:475.00px;font-size:17.2px;line-height:17.2px;font-weight:700;color:#000;transform:scaleX(1.0506);-webkit-text-stroke:0.25px currentColor;">0</div>
<div class="t" style="left:1437.70px;top:475.00px;font-size:17.2px;line-height:17.2px;font-weight:700;color:#000;transform:scaleX(1.0506);-webkit-text-stroke:0.25px currentColor;">0</div>
<div class="t" style="left:1624.90px;top:475.00px;font-size:17.2px;line-height:17.2px;font-weight:700;color:#000;transform:scaleX(1.0506);-webkit-text-stroke:0.25px currentColor;">0</div>
<div class="t" style="left:1824.10px;top:475.00px;font-size:17.2px;line-height:17.2px;font-weight:700;color:#000;transform:scaleX(1.0506);-webkit-text-stroke:0.25px currentColor;">4986<span style="padding:0 0.75px">,</span>5</div>
<div class="t" style="left:2040.20px;top:475.00px;font-size:17.2px;line-height:17.2px;font-weight:700;color:#000;transform:scaleX(1.0506);-webkit-text-stroke:0.25px currentColor;">214<span style="padding:0 0.75px">,</span>89</div>
<div class="t" style="left:78.60px;top:504.00px;font-size:17.2px;line-height:17.2px;font-weight:700;color:#000;transform:scaleX(1.0506);-webkit-text-stroke:0.25px currentColor;">111</div>
<div class="t" style="left:119.00px;top:504.00px;font-size:17.2px;line-height:17.2px;font-weight:700;color:#000;transform:scaleX(1.0506);-webkit-text-stroke:0.25px currentColor;">22.08.2024 09:46:05</div>
<svg class="r" style="left:324px;top:502.2px;" width="20" height="20" viewBox="0 0 20 20"><rect x="0.9" y="0.9" width="17.6" height="17.6" fill="#fff" stroke="#555" stroke-width="1.6"/></svg>
<div class="t" style="left:378.20px;top:504.00px;font-size:17.2px;line-height:17.2px;font-weight:700;color:#000;transform:scaleX(1.0060);-webkit-text-stroke:0.25px currentColor;">GIFT</div>
<div class="t" style="left:477.60px;top:504.00px;font-size:17.2px;line-height:17.2px;font-weight:700;color:#000;transform:scaleX(1.0506);-webkit-text-stroke:0.25px currentColor;">3799<span style="padding:0 0.75px">,</span>51</div>
<div class="t" style="left:718.80px;top:504.00px;font-size:17.2px;line-height:17.2px;font-weight:700;color:#000;transform:scaleX(1.0506);-webkit-text-stroke:0.25px currentColor;">54<span style="padding:0 0.75px">,</span>29</div>
<div class="t" style="left:996.10px;top:504.00px;font-size:17.2px;line-height:17.2px;font-weight:700;color:#000;transform:scaleX(1.0506);-webkit-text-stroke:0.25px currentColor;">3853<span style="padding:0 0.75px">,</span>8</div>
<div class="t" style="left:1824.10px;top:504.00px;font-size:17.2px;line-height:17.2px;font-weight:700;color:#000;transform:scaleX(1.0506);-webkit-text-stroke:0.25px currentColor;">4986<span style="padding:0 0.75px">,</span>5</div>
<div class="t" style="left:2040.20px;top:504.00px;font-size:17.2px;line-height:17.2px;font-weight:700;color:#000;transform:scaleX(1.0506);-webkit-text-stroke:0.25px currentColor;">214<span style="padding:0 0.75px">,</span>89</div>
<div class="t" style="left:22.30px;top:262.00px;font-size:17.2px;line-height:17.2px;font-weight:700;color:#fff;transform:scaleX(1.0506);-webkit-text-stroke:0.25px currentColor;">1</div>
<div class="t" style="left:22.30px;top:318.00px;font-size:17.2px;line-height:17.2px;font-weight:700;color:#000;transform:scaleX(1.0506);-webkit-text-stroke:0.25px currentColor;">2</div>
<div class="t" style="left:22.30px;top:376.00px;font-size:17.2px;line-height:17.2px;font-weight:700;color:#000;transform:scaleX(1.0506);-webkit-text-stroke:0.25px currentColor;">3</div>
<div class="t" style="left:22.30px;top:432.00px;font-size:17.2px;line-height:17.2px;font-weight:700;color:#000;transform:scaleX(1.0506);-webkit-text-stroke:0.25px currentColor;">4</div>
<div class="t" style="left:22.30px;top:490.00px;font-size:17.2px;line-height:17.2px;font-weight:700;color:#000;transform:scaleX(1.0506);-webkit-text-stroke:0.25px currentColor;">5</div>
<div class="r" style="left:16px;top:881px;width:2px;height:63px;background:#bcbcbc;"></div>
<div class="r" style="left:18px;top:882px;width:1px;height:62px;background:#f4f5f8;"></div>
<div class="r" style="left:117px;top:883px;width:175px;height:28px;background:#e6e9ea;box-sizing:border-box;border:1px solid #d9dddd;"></div>
<div class="t" style="left:121.50px;top:890.00px;font-size:16.5px;line-height:16.5px;font-weight:700;color:#111;transform:scaleX(1.0364);-webkit-text-stroke:0.1px currentColor;">Запис 1 із 5</div>
<div class="r" style="left:25.5px;top:947.2px;width:1361.8px;height:22.5px;background:#a6a6a6;"></div>
<svg class="r" style="left:7px;top:952.5px;" width="12" height="12" viewBox="0 0 12 12"><path d="M5.2 0.5 L9.8 0.5 L4.6 6 L9.8 11.5 L5.2 11.5 L0.1 6 Z" fill="#5e5e5e"/></svg>
<svg class="r" style="left:2142px;top:952.5px;" width="12" height="12" viewBox="0 0 12 12"><path d="M1 0.6 L5.6 0.6 L10.8 6 L5.6 11.4 L1 11.4 L6.2 6 Z" fill="#5e5e5e"/></svg>
<svg class="r" style="left:4.4px;top:983.4px;" width="6" height="26" viewBox="0 0 6 26"><rect x="0" y="0.00" width="4.4" height="1.7" fill="#b2b2b2"/><rect x="0" y="3.00" width="4.4" height="1.7" fill="#b2b2b2"/><rect x="0" y="6.00" width="4.4" height="1.7" fill="#b2b2b2"/><rect x="0" y="9.00" width="4.4" height="1.7" fill="#b2b2b2"/><rect x="0" y="12.00" width="4.4" height="1.7" fill="#b2b2b2"/><rect x="0" y="15.00" width="4.4" height="1.7" fill="#b2b2b2"/><rect x="0" y="18.00" width="4.4" height="1.7" fill="#b2b2b2"/><rect x="0" y="21.00" width="4.4" height="1.7" fill="#b2b2b2"/></svg>
<svg class="r" style="left:17.3px;top:985.2px;" width="22" height="21" viewBox="0 0 22 21"><defs><linearGradient id="pg" x1="0" y1="0" x2="0" y2="1"><stop offset="0" stop-color="#b4f5ac"/><stop offset="1" stop-color="#86d283"/></linearGradient></defs><path d="M8.2 0.7 H13.3 V7.8 H20.4 V12.7 H13.3 V19.9 H8.2 V12.7 H1 V7.8 H8.2 Z" fill="url(#pg)" stroke="#6cbf6c" stroke-width="1.3" stroke-linejoin="round"/></svg>
<div class="t" style="left:47.20px;top:987.00px;font-size:17.5px;line-height:17.5px;font-weight:400;color:#111;transform:scaleX(1.0283);-webkit-text-stroke:0.15px currentColor;">Створити переоблік</div>
<svg class="r" style="left:218.3px;top:980.3px;" width="34" height="32" viewBox="0 0 34 32"><defs><linearGradient id="pcg" x1="0" y1="0" x2="0" y2="1"><stop offset="0" stop-color="#fbf0a8"/><stop offset="0.45" stop-color="#f7dc5a"/><stop offset="1" stop-color="#d9b640"/></linearGradient></defs><g transform="translate(17,16) rotate(-45) scale(0.9)"><path d="M-11.5 -3.9 H9 V3.9 H-11.5 Z" fill="url(#pcg)" stroke="#c9a440" stroke-width="0.7"/><path d="M9 -3.9 H12.6 V3.9 H9 Z" fill="#cfcfcf" stroke="#a8a8a8" stroke-width="0.5"/><path d="M12.6 -3.9 H15.5 Q17.6 -3.9 17.6 0 Q17.6 3.9 15.5 3.9 H12.6 Z" fill="#ee8080"/><path d="M-11.5 -3.9 L-17 -1.6 V1.6 L-11.5 3.9 Z" fill="#f6b896"/><path d="M-15 -2.2 L-17.6 -1.2 V1.2 L-15 2.2 Z" fill="#555"/></g></svg>
<div class="t" style="left:254.30px;top:987.00px;font-size:17.5px;line-height:17.5px;font-weight:400;color:#111;transform:scaleX(0.9677);-webkit-text-stroke:0.15px currentColor;">Редагувати</div>
<svg class="r" style="left:350.5px;top:980.8px;" width="32" height="30" viewBox="0 0 32 30"><defs><linearGradient id="xg" x1="0" y1="0" x2="0" y2="1"><stop offset="0" stop-color="#fdbda4"/><stop offset="1" stop-color="#f58f72"/></linearGradient></defs><path d="M6.9 6.3 L23.9 23.3 M23.9 6.3 L6.9 23.3" stroke="#ec7e64" stroke-width="6.4"/><path d="M7.6 7.0 L23.2 22.6 M23.2 7.0 L7.6 22.6" stroke="url(#xg)" stroke-width="4.0"/></svg>
<div class="t" style="left:384.70px;top:987.00px;font-size:17.5px;line-height:17.5px;font-weight:400;color:#111;transform:scaleX(0.9650);-webkit-text-stroke:0.15px currentColor;">Видалити</div>
<div class="r" style="left:471.2px;top:979px;width:1.1999999999999886px;height:32.299999999999955px;background:#a9a9a9;"></div>
<svg class="r" style="left:476px;top:980px;" width="32" height="30" viewBox="0 0 32 30"><rect x="4.5" y="5.5" width="23" height="20" fill="#e2e2e2" opacity="0.7"/><rect x="5.2" y="6.1" width="1.6" height="18.1" fill="#747474"/><rect x="8.3" y="6.1" width="1.5" height="14.9" fill="#747474"/><rect x="11.4" y="6.1" width="1.5" height="14.9" fill="#747474"/><rect x="14.4" y="6.1" width="1.5" height="14.9" fill="#747474"/><rect x="17.7" y="6.1" width="2.6" height="14.9" fill="#5a5a5a"/><rect x="22" y="6.1" width="1.6" height="14.9" fill="#747474"/><rect x="25.1" y="6.1" width="1.5" height="18.1" fill="#747474"/><circle cx="9.2" cy="23.6" r="0.95" fill="#555"/><circle cx="13.6" cy="23.6" r="0.95" fill="#555"/><circle cx="16.7" cy="23.6" r="0.95" fill="#555"/><circle cx="19.8" cy="23.6" r="0.95" fill="#555"/><circle cx="22.8" cy="23.6" r="0.95" fill="#555"/></svg>
<div class="t" style="left:511.00px;top:987.00px;font-size:17.5px;line-height:17.5px;font-weight:400;color:#111;transform:scaleX(0.9897);-webkit-text-stroke:0.15px currentColor;">Сканер ШК</div>
<svg class="r" style="left:605.5px;top:992px;" width="9" height="5" viewBox="0 0 9 5"><path d="M0 0 H8.2 L4.1 4.4 Z" fill="#000"/></svg>
<div class="r" style="left:625.7px;top:979px;width:1.2000000000000455px;height:32.299999999999955px;background:#a9a9a9;"></div>
<svg class="r" style="left:637.4px;top:987.6px;" width="19" height="18" viewBox="0 0 19 18"><rect x="0" y="0.00" width="7.5" height="1.6" fill="#a8a8a8"/><rect x="10.6" y="0.00" width="7.5" height="1.6" fill="#a8a8a8"/><rect x="0" y="3.03" width="7.5" height="1.6" fill="#9c9c9c"/><rect x="10.6" y="3.03" width="7.5" height="1.6" fill="#9c9c9c"/><rect x="0" y="6.06" width="7.5" height="1.6" fill="#909090"/><rect x="10.6" y="6.06" width="7.5" height="1.6" fill="#909090"/><rect x="0" y="9.09" width="7.5" height="1.6" fill="#848484"/><rect x="10.6" y="9.09" width="7.5" height="1.6" fill="#848484"/><rect x="0" y="12.12" width="7.5" height="1.6" fill="#787878"/><rect x="10.6" y="12.12" width="7.5" height="1.6" fill="#787878"/><rect x="0" y="15.15" width="7.5" height="1.6" fill="#6c6c6c"/><rect x="10.6" y="15.15" width="7.5" height="1.6" fill="#6c6c6c"/></svg>
<svg class="r" style="left:2033.5px;top:984px;" width="23" height="24" viewBox="0 0 23 24"><defs><linearGradient id="rg" x1="0" y1="0" x2="0" y2="1"><stop offset="0" stop-color="#b5e0fb"/><stop offset="1" stop-color="#6cc6f5"/></linearGradient></defs><path d="M10.5 21 A9 9 0 0 1 5 5.5 L1.5 2.5 H10.5 V11 L7.8 8.3 A5.5 5.5 0 0 0 10.5 17.2 Z" fill="url(#rg)" stroke="#7cb2de" stroke-width="0.9"/><path d="M12 3 A9 9 0 0 1 17.5 18.5 L21 21.5 H12 V13 L14.7 15.7 A5.5 5.5 0 0 0 12 6.8 Z" fill="url(#rg)" stroke="#5c9ad0" stroke-width="0.9"/><ellipse cx="11.5" cy="22.3" rx="8" ry="1.2" fill="#d0d0d0" opacity="0.7"/></svg>
<div class="t" style="left:2062.30px;top:987.00px;font-size:17.5px;line-height:17.5px;font-weight:400;color:#111;transform:scaleX(1.0204);-webkit-text-stroke:0.15px currentColor;">Оновити</div>
<svg class="r" style="left:2145px;top:1001.5px;" width="10" height="6" viewBox="0 0 10 6"><path d="M0 0 H7.7 L3.85 4.8 Z" fill="#000"/></svg>
<div class="r" style="left:1px;top:1015px;width:2158px;height:25px;background:#e4e4e4;box-sizing:border-box;border:1.5px solid #c6c6c6;"></div>
<div class="t" style="left:13.00px;top:1060.00px;font-size:18.5px;line-height:18.5px;font-weight:700;color:#111;transform:scaleX(1.0540);-webkit-text-stroke:0.25px currentColor;">Перетягніть заголовок колонки сюди для угруповання з цього стовпцю</div>
<div class="r" style="left:16px;top:1094px;width:2px;height:29px;background:#e8e8e8;"></div>
<div class="r" style="left:127px;top:1094px;width:2px;height:29px;background:#e8e8e8;"></div>
<div class="r" style="left:195px;top:1094px;width:2px;height:29px;background:#e8e8e8;"></div>
<div class="r" style="left:348px;top:1094px;width:2px;height:29px;background:#e8e8e8;"></div>
<div class="r" style="left:502px;top:1094px;width:2px;height:29px;background:#e8e8e8;"></div>
<div class="r" style="left:652px;top:1094px;width:2px;height:29px;background:#e8e8e8;"></div>
<div class="r" style="left:918px;top:1094px;width:2px;height:29px;background:#e8e8e8;"></div>
<div class="r" style="left:1260px;top:1094px;width:2px;height:29px;background:#e8e8e8;"></div>
<svg class="r" style="left:4.2px;top:1101.8px;" width="10" height="14" viewBox="0 0 10 14"><rect x="0" y="0" width="1.6" height="1.6" fill="#222"/><rect x="3.4" y="0" width="6" height="1.6" fill="#222"/><rect x="3.4" y="3" width="6" height="1.6" fill="#222"/><rect x="0" y="6" width="1.6" height="1.6" fill="#222"/><rect x="3.4" y="6" width="6" height="1.6" fill="#222"/><rect x="3.4" y="9" width="6" height="1.6" fill="#222"/><rect x="0" y="12" width="1.6" height="1.6" fill="#222"/><rect x="3.4" y="12" width="6" height="1.6" fill="#222"/></svg>
<div class="t" style="left:50.00px;top:1102.00px;font-size:16.3px;line-height:16.3px;font-weight:400;color:#111;transform:scaleX(1.0478);-webkit-text-stroke:0.05px currentColor;">№ п/п</div>
<div class="t" style="left:153.70px;top:1102.00px;font-size:16.3px;line-height:16.3px;font-weight:400;color:#111;transform:scaleX(0.9632);-webkit-text-stroke:0.05px currentColor;">ID</div>
<div class="t" style="left:209.50px;top:1102.00px;font-size:16.3px;line-height:16.3px;font-weight:400;color:#111;transform:scaleX(1.0522);-webkit-text-stroke:0.05px currentColor;">Дата документу</div>
<div class="t" style="left:380.20px;top:1102.00px;font-size:16.3px;line-height:16.3px;font-weight:400;color:#111;transform:scaleX(1.0422);-webkit-text-stroke:0.05px currentColor;">Користувач</div>
<div class="t" style="left:519.50px;top:1102.00px;font-size:16.3px;line-height:16.3px;font-weight:400;color:#111;transform:scaleX(0.9789);-webkit-text-stroke:0.05px currentColor;">Сума роздрібна</div>
<div class="t" style="left:669.60px;top:1102.00px;font-size:16.3px;line-height:16.3px;font-weight:400;color:#111;transform:scaleX(1.0063);-webkit-text-stroke:0.05px currentColor;">Строк матеріальних цінностей</div>
<div class="t" style="left:927.90px;top:1102.00px;font-size:16.3px;line-height:16.3px;font-weight:400;color:#111;transform:scaleX(1.0065);-webkit-text-stroke:0.05px currentColor;">Строк матеріальних цінностей у наявності</div>
<div class="t" style="left:1303.20px;top:1102.00px;font-size:16.3px;line-height:16.3px;font-weight:400;color:#111;transform:scaleX(1.0116);-webkit-text-stroke:0.05px currentColor;">Коментар</div>
<div class="r" style="left:0px;top:1123px;width:17px;height:57px;background:#f0f0f0;"></div>
<div class="r" style="left:17px;top:1123px;width:1405px;height:28px;background:#efefef;"></div>
<div class="r" style="left:16px;top:1123px;width:2px;height:57px;background:#b4b4b4;"></div>
<div class="r" style="left:127px;top:1123px;width:2px;height:57px;background:#b4b4b4;"></div>
<div class="r" style="left:195px;top:1123px;width:2px;height:57px;background:#b4b4b4;"></div>
<div class="r" style="left:348px;top:1123px;width:2px;height:57px;background:#b4b4b4;"></div>
<div class="r" style="left:502px;top:1123px;width:2px;height:57px;background:#b4b4b4;"></div>
<div class="r" style="left:652px;top:1123px;width:2px;height:57px;background:#b4b4b4;"></div>
<div class="r" style="left:918px;top:1123px;width:2px;height:57px;background:#b4b4b4;"></div>
<div class="r" style="left:1260px;top:1123px;width:2px;height:57px;background:#b4b4b4;"></div>
<div class="r" style="left:1422px;top:1123px;width:2px;height:57px;background:#b4b4b4;"></div>
<div class="r" style="left:17px;top:1150px;width:1407px;height:2px;background:#b4b4b4;"></div>
<div class="r" style="left:0px;top:1178px;width:1424px;height:2px;background:#b4b4b4;"></div>
<svg class="r" style="left:5.5px;top:1129.5px;" width="9" height="15" viewBox="0 0 9 15"><path d="M0.4 0.4 L8 7.2 L0.4 14.2 Z" fill="#000"/></svg>
<div class="t" style="left:21.60px;top:1128.00px;font-size:17.2px;line-height:17.2px;font-weight:700;color:#000;transform:scaleX(1.0506);-webkit-text-stroke:0.25px currentColor;">1</div>
<div class="t" style="left:132.70px;top:1128.00px;font-size:17.2px;line-height:17.2px;font-weight:700;color:#000;transform:scaleX(1.0506);-webkit-text-stroke:0.25px currentColor;">84</div>
<div class="t" style="left:200.00px;top:1128.00px;font-size:17.2px;line-height:17.2px;font-weight:700;color:#000;transform:scaleX(1.0506);-webkit-text-stroke:0.25px currentColor;">03.09.2023 12:...</div>
<div class="t" style="left:353.10px;top:1128.00px;font-size:17.2px;line-height:17.2px;font-weight:700;color:#000;transform:scaleX(1.0060);-webkit-text-stroke:0.25px currentColor;">ADMIN</div>
<div class="t" style="left:507.70px;top:1128.00px;font-size:17.2px;line-height:17.2px;font-weight:700;color:#000;transform:scaleX(1.0506);-webkit-text-stroke:0.25px currentColor;">8</div>
<div class="t" style="left:657.70px;top:1128.00px;font-size:17.2px;line-height:17.2px;font-weight:700;color:#000;transform:scaleX(1.0506);-webkit-text-stroke:0.25px currentColor;">22</div>
<div class="t" style="left:922.90px;top:1128.00px;font-size:17.2px;line-height:17.2px;font-weight:700;color:#000;transform:scaleX(1.0506);-webkit-text-stroke:0.25px currentColor;">1</div>
<div class="t" style="left:21.60px;top:1156.00px;font-size:17.2px;line-height:17.2px;font-weight:700;color:#000;transform:scaleX(1.0506);-webkit-text-stroke:0.25px currentColor;">2</div>
<div class="t" style="left:132.70px;top:1156.00px;font-size:17.2px;line-height:17.2px;font-weight:700;color:#000;transform:scaleX(1.0506);-webkit-text-stroke:0.25px currentColor;">87</div>
<div class="t" style="left:200.00px;top:1156.00px;font-size:17.2px;line-height:17.2px;font-weight:700;color:#000;transform:scaleX(1.0506);-webkit-text-stroke:0.25px currentColor;">10.10.2023 10:...</div>
<div class="t" style="left:353.10px;top:1156.00px;font-size:17.2px;line-height:17.2px;font-weight:700;color:#000;transform:scaleX(1.0060);-webkit-text-stroke:0.25px currentColor;">GIFT</div>
<div class="t" style="left:657.70px;top:1156.00px;font-size:17.2px;line-height:17.2px;font-weight:700;color:#000;transform:scaleX(1.0506);-webkit-text-stroke:0.25px currentColor;">22</div>
<div class="t" style="left:922.90px;top:1156.00px;font-size:17.2px;line-height:17.2px;font-weight:700;color:#000;transform:scaleX(1.0506);-webkit-text-stroke:0.25px currentColor;">0</div>
<div class="r" style="left:0px;top:1271px;width:1422px;height:32px;background:#f0f0f0;"></div>
<div class="r" style="left:0px;top:1269px;width:1424px;height:1px;background:#bdbdbd;"></div>
<div class="r" style="left:0px;top:1270px;width:1424px;height:2px;background:#9e9e9e;"></div>
<div class="r" style="left:0px;top:1272px;width:1422px;height:1px;background:#d2d2d2;"></div>
<div class="r" style="left:16px;top:1272px;width:2px;height:31px;background:#bcbcbc;"></div>
<div class="r" style="left:1422px;top:1269px;width:2px;height:35px;background:#b4b4b4;"></div>
<div class="r" style="left:0px;top:1302.5px;width:1423.4px;height:1.2999999999999545px;background:#c8c8c8;"></div>
<div class="r" style="left:198.3px;top:1273.3px;width:149.0px;height:27.40000000000009px;background:#e6e9ea;box-sizing:border-box;border:1px solid #d9dddd;"></div>
<div class="t" style="left:203.30px;top:1280.00px;font-size:16.5px;line-height:16.5px;font-weight:700;color:#111;transform:scaleX(1.0322);-webkit-text-stroke:0.1px currentColor;">Запис 1 із 2</div>
<div class="r" style="left:5px;top:1307px;width:187px;height:35px;background:#f0f0f0;box-sizing:border-box;border:2px solid #222;"></div>
<div class="t" style="left:9.50px;top:1316.00px;font-size:16.5px;line-height:16.5px;font-weight:400;color:#111;transform:scaleX(0.9697);">Головна</div>
<div class="r" style="left:195px;top:1307px;width:188px;height:35px;background:#ffd3a7;box-sizing:border-box;border:2px solid #2288e0;"></div>
<div class="t" style="left:198.70px;top:1316.00px;font-size:16.5px;line-height:16.5px;font-weight:400;color:#111;transform:scaleX(1.0035);">Інвентаризація</div>
<svg class="r" style="left:0px;top:1346px;" width="26" height="28" viewBox="0 0 26 28"><defs><linearGradient id="dbt" x1="0" y1="0" x2="1" y2="0"><stop offset="0" stop-color="#eeeeff"/><stop offset="1" stop-color="#9a98c0"/></linearGradient><linearGradient id="dbb" x1="0" y1="0" x2="1" y2="0"><stop offset="0" stop-color="#a8a6d8"/><stop offset="1" stop-color="#5a5890"/></linearGradient></defs><path d="M4.8 5.4 L20 5.6 L22.4 7 V23.5 L9.5 25.8 L4.8 22 Z" fill="url(#dbb)"/><path d="M4.8 5.4 L20 5.6 L22.4 7 V11.5 L5 11 Z" fill="url(#dbt)"/><path d="M5 11.3 L22.4 11.8 V20.5 L5 20 Z" fill="#5f95da"/><path d="M5.5 13 L22.4 13.4 M5.5 16.1 L22.4 16.4 M5.5 19.1 L22.4 19.4" stroke="#1570d8" stroke-width="1.5"/></svg>
<div class="t" style="left:31.30px;top:1352.00px;font-size:18px;line-height:18px;font-weight:400;color:#262626;transform:scaleX(0.9061);">База даних: TASA3@TITAN</div>
<div class="r" style="left:296.8px;top:1348px;width:1.099999999999966px;height:26px;background:#d4d4d4;"></div>
<svg class="r" style="left:298px;top:1346px;" width="26" height="28" viewBox="0 0 26 28"><defs><radialGradient id="ub" cx="0.4" cy="0.3" r="0.8"><stop offset="0" stop-color="#ececfc"/><stop offset="1" stop-color="#7e7ec8"/></radialGradient></defs><path d="M6.4 13 A5.5 5.8 0 0 1 16 6.5 L12 9 Z" fill="#e8401c"/><path d="M6.2 15 Q6.5 6.5 11.5 5.5 Q13 5.6 14 6.3 L9 12 Z" fill="#e63a16"/><ellipse cx="14.2" cy="12.2" rx="4.6" ry="4.5" fill="url(#ub)"/><ellipse cx="14" cy="17.4" rx="2.6" ry="1.5" fill="#e8a058"/><path d="M6.2 25.5 Q6 17.5 11 17.6 L14 19 L17 17.6 Q21.8 17.8 21.6 25.5 Q14 27.2 6.2 25.5 Z" fill="url(#ub)"/></svg>
<div class="t" style="left:329.30px;top:1352.00px;font-size:18px;line-height:18px;font-weight:400;color:#262626;transform:scaleX(0.8814);">Користувач: GIFT</div>
<div class="r" style="left:602.9px;top:1348px;width:1.1000000000000227px;height:26px;background:#d4d4d4;"></div>
<svg class="r" style="left:595px;top:1345px;" width="36" height="29" viewBox="0 0 36 29"><defs><linearGradient id="cg" x1="0" y1="0" x2="0" y2="1"><stop offset="0" stop-color="#d4d4f4"/><stop offset="0.45" stop-color="#9a9ad8"/><stop offset="1" stop-color="#6c6cc0"/></linearGradient></defs><path d="M12.4 12.5 Q13 8.5 16.5 7.5 H20 L31.8 12.2 V24 H12.6 Z" fill="url(#cg)"/><path d="M17.5 7.5 H24.5 L31.8 12.2 H13 Q14 8.8 17.5 7.5 Z" fill="#c8c8ee"/><path d="M25 4.5 L27.5 9.5" stroke="#333" stroke-width="1.3"/><path d="M17.2 15 L19.2 15 L16.8 20 L18.3 20 L14.2 25.8 L15.2 21 L13.8 21 Z" fill="#f4d03c" stroke="#3a3020" stroke-width="0.6"/><path d="M26 18 L27.8 18 L25.6 22.2 L27 22.2 L23.5 27 L24.3 23.2 L23 23.2 Z" fill="#f4d03c" stroke="#3a3020" stroke-width="0.6"/></svg>
<div class="t" style="left:635.70px;top:1352.00px;font-size:18px;line-height:18px;font-weight:400;color:#262626;transform:scaleX(0.8293);">5</div>
<div class="r" style="left:661.8px;top:1348px;width:1.1000000000000227px;height:26px;background:#d4d4d4;"></div>
<div class="t" style="left:666.70px;top:1352.00px;font-size:18px;line-height:18px;font-weight:400;color:#262626;transform:scaleX(0.9152);">Кассовый аппарат не подключен</div>
<div class="r" style="left:1117.6px;top:1348px;width:1.1000000000001364px;height:26px;background:#d4d4d4;"></div>
<div class="t" style="left:1123.50px;top:1352.00px;font-size:18px;line-height:18px;font-weight:400;color:#262626;transform:scaleX(0.8895);">Зона: Склад [1]</div>
<svg class="r" style="left:0;top:0;z-index:5" width="2159" height="1374" viewBox="0 0 2159 1374"><path d="M496.15 146.00 L500.50 164.70 L502.06 159.22 L530.99 194.98 L577.53 252.52 L619.08 303.79 L650.57 342.64 L713.66 420.22 L771.71 491.59 L808.59 536.37 L840.37 574.97 L872.14 613.58 L885.27 629.55 L886.13 628.85 L873.31 612.63 L842.32 573.40 L811.34 534.15 L775.41 488.61 L717.98 416.74 L655.55 338.62 L624.27 299.61 L582.98 248.12 L536.63 190.44 L507.82 154.58 L513.00 154.30 Z" fill="#f40000" stroke="#f40000" stroke-width="0.8" stroke-linejoin="round"/></svg>
</body></html>
